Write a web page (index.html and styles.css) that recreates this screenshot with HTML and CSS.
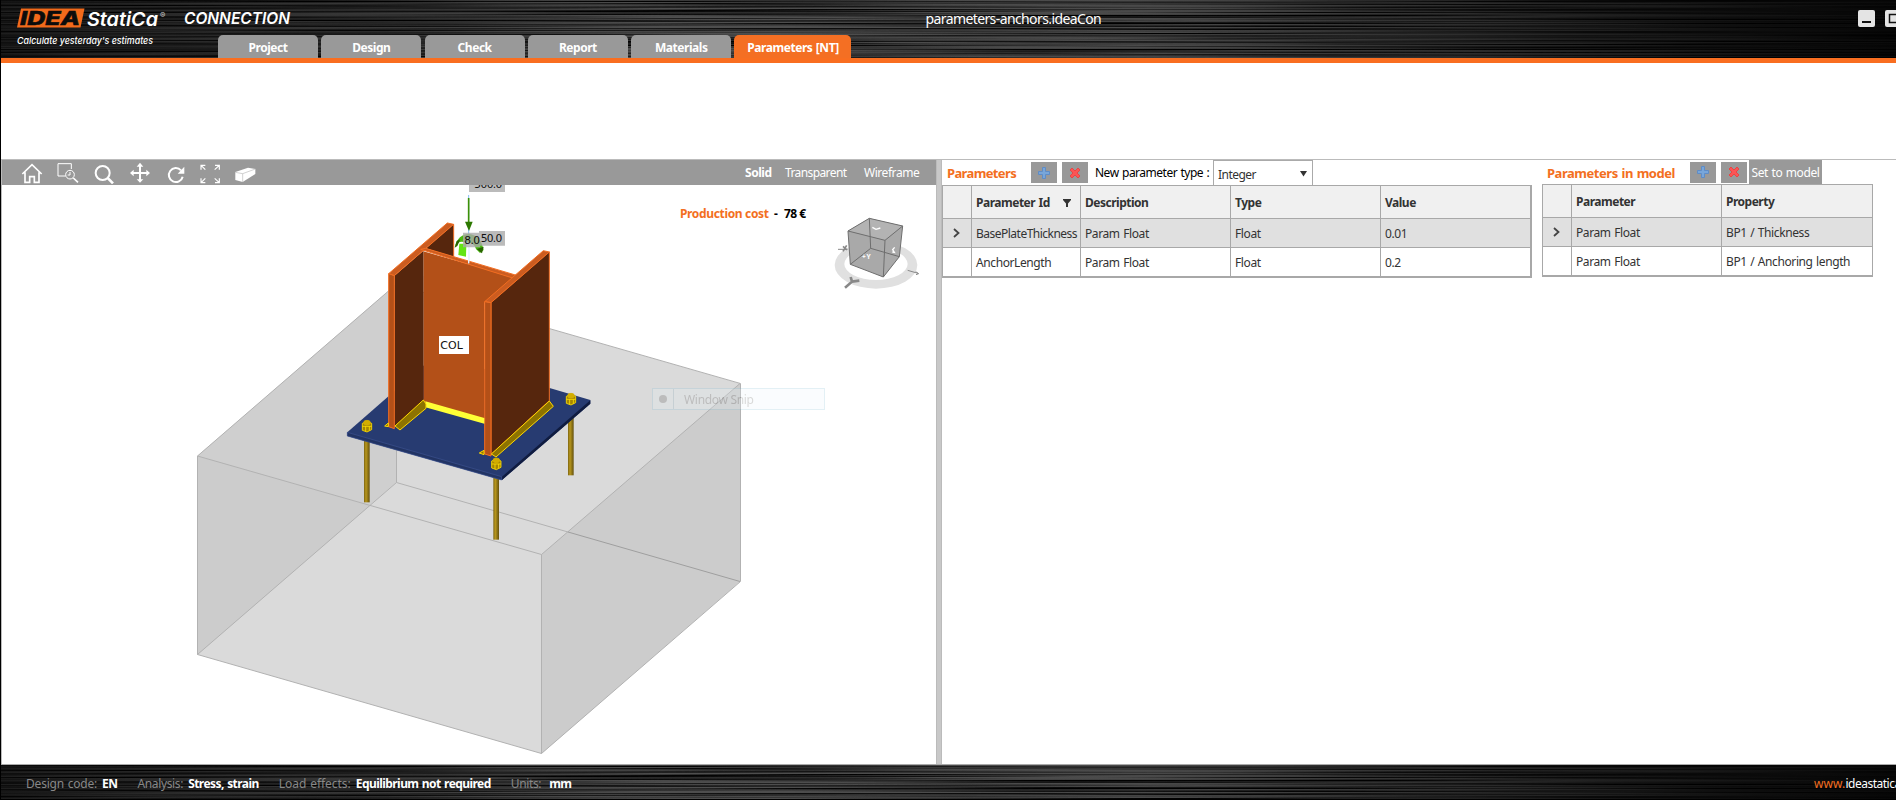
FILE: index.html
```
<!DOCTYPE html>
<html lang="en">
<head>
<meta charset="utf-8">
<title>parameters-anchors.ideaCon</title>
<link rel="stylesheet" href="styles.css">
</head>
<body>
<div class="app">
  <header class="header">
    <svg class="brushed" width="1896" height="58" aria-hidden="true">
      <defs>
        <filter id="brush" x="0" y="0" width="100%" height="100%">
          <feTurbulence type="fractalNoise" baseFrequency="0.0022 0.73" numOctaves="2" seed="11"/>
          <feColorMatrix type="matrix" values="0 0 0 0 0  0 0 0 0 0  0 0 0 0 0  2.4 0 0 0 -0.85"/>
        </filter>
        <linearGradient id="steel">
          <stop offset="0" stop-color="#1e1e1e"/><stop offset=".15" stop-color="#323232"/>
          <stop offset=".35" stop-color="#4e4e4e"/><stop offset=".6" stop-color="#4a4a4a"/>
          <stop offset=".85" stop-color="#1f1f1f"/><stop offset="1" stop-color="#0a0a0a"/>
        </linearGradient>
      </defs>
      <rect width="1896" height="58" fill="url(#steel)"/>
      <rect width="1896" height="58" filter="url(#brush)"/>
    </svg>
    <svg class="logo" width="183" height="58" viewBox="0 0 183 58">
      <path d="M21 8.500H84.500L80.500 27.500H17Z" fill="#f26a1b"/>
      <text x="20" y="25" class="logo-idea" textLength="60" lengthAdjust="spacingAndGlyphs">IDEA</text>
      <text x="87" y="26" class="logo-statica" textLength="71" lengthAdjust="spacingAndGlyphs">StatiCa</text>
      <text x="160" y="18" class="logo-reg">®</text>
      <text x="17" y="44" class="logo-tag" textLength="136" lengthAdjust="spacingAndGlyphs">Calculate yesterday's estimates</text>
    </svg>
    <svg class="product" width="125" height="30" viewBox="0 0 125 30">
      <text x="1" y="24" class="logo-conn" textLength="106" lengthAdjust="spacingAndGlyphs">CONNECTION</text>
    </svg>
    <nav class="tabs">
      <a class="tab">Project</a><a class="tab">Design</a><a class="tab">Check</a><a class="tab">Report</a><a class="tab">Materials</a><a class="tab tab-active">Parameters [NT]</a>
    </nav>
    <div class="doc-title">parameters-anchors.ideaCon</div>
    <div class="win-buttons">
      <svg width="17" height="17"><rect width="17" height="17" rx="2" fill="#e4e4e4"/><path d="M4 12H13" stroke="#111" stroke-width="2"/></svg>
      <svg width="17" height="17"><rect width="17" height="17" rx="2" fill="#e4e4e4"/><rect x="4.500" y="4.500" width="9" height="8" fill="none" stroke="#111" stroke-width="1.500"/></svg>
    </div>
  </header>
  <div class="ribbon"></div>
  <main class="main">
    <section class="viewer">
      <div class="toolbar">
        <svg width="22" height="22" viewBox="60 36 66 66" fill="none" stroke="#fff" stroke-width="5"><path d="M64 72L93 44L122 72M72 67V97H86V80H100V97H114V67"/></svg>
        <svg width="22" height="22" viewBox="171 36 66 66" fill="none" stroke="#fff" stroke-width="3"><path d="M197 78H174V41H214V57M210 66V75H203"/><circle cx="210" cy="74" r="13"/><path d="M220 84L234 97" stroke-width="5"/></svg>
        <svg width="22" height="22" viewBox="279 36 66 66" fill="none" stroke="#fff" stroke-width="6"><circle cx="308" cy="69" r="21"/><path d="M322 83L339 100" stroke-width="8"/></svg>
        <svg width="22" height="22" viewBox="387 36 66 66" fill="#fff"><path d="M420 38L430 50H423V66H439V59L450 69L439 79V72H423V88H430L420 98L410 88H417V72H401V79L390 69L401 59V66H417V50H410Z"/></svg>
        <svg width="22" height="22" viewBox="495 36 66 66" fill="none" stroke="#fff" stroke-width="6"><path d="M543 61A21 21 0 1 0 548 80"/><path d="M533 71H553V50Z" fill="#fff" stroke="none"/></svg>
        <svg class="icon-fit" width="22" height="22" viewBox="597 36 66 66" fill="none" stroke="#fff" stroke-width="3.500"><path d="M603 59V46H616M604 47L616 59M645 46H658V59M657 47L644 59M603 85V98H616M604 97L616 85M645 98H658V85M657 97L644 85"/></svg>
        <svg class="icon-box" width="24" height="22" viewBox="699 36 72 66"><path d="M706 66L744 53L766 57V72L728 96L706 90Z" fill="#fff"/><path d="M706 67L728 71L766 57M728 71V96" fill="none" stroke="#bbb" stroke-width="2"/></svg>
        <div class="modes"><b>Solid</b><span>Transparent</span><span>Wireframe</span></div>
      </div>
      <svg class="scene" width="934" height="579" viewBox="2 185 934 579">
        <!-- concrete block -->
        <path d="M197.500 456L396 284.500L740 383.500V581.500L541.500 753.500L197.500 654.500Z" fill="#dadada"/>
        <path d="M197.500 456L396 284.500V482.500L197.500 654.500Z" fill="#cfcfcf"/>
        <path d="M197.500 456L370 505.500L197.500 654.500Z" fill="#cccccc"/>
        <path d="M541.500 554.500L740 383.500V581.500L541.500 753.500Z" fill="#cccccc"/>
        <g fill="none" stroke="#b2b2b2">
          <path d="M197.500 456L396 284.500L740.500 383.500V581.500L541.500 753.500L197.500 654.500ZL541.500 554.500L740 383.500M541.500 554.500V753.500M396.500 284V482.500L197.500 654.500M396.500 482.500L568 532"/>
          <path d="M568 532L740 581.500" stroke="#9f9f9f"/>
        </g>
        <defs><linearGradient id="rod"><stop offset="0" stop-color="#7c6411"/><stop offset=".35" stop-color="#b8971d"/><stop offset="1" stop-color="#64510d"/></linearGradient></defs>
        <g transform="translate(330 180) scale(.33333)">
          <!-- anchors and base plate -->
          <g fill="url(#rod)"><path d="M102 770H119V967H102Z"/><path d="M490 880H507V1079H490Z"/><path d="M714 700H731V886H714Z"/></g>
          <path d="M52 757L318 524L781 660V671L516 900L52 768Z" fill="#273b71"/>
          <path d="M781 661V671L516 900V890Z" fill="#101c40"/>
          <path d="M52 757L515 890V900L52 768Z" fill="#223464" stroke="#3c5190" stroke-width="2"/>
          <!-- column -->
          <path d="M287 205L371 132V230L340 222Z" fill="#56260d"/>
          <path d="M280 214L555 292L463 368V722L280 668Z" fill="#b35018"/>
          <path d="M193 287L280 212V662L193 742Z" fill="#56260d"/>
          <g stroke="#f26d21" stroke-width="3" stroke-linejoin="round">
            <path d="M176 281L352 129L371 133L193 287Z" fill="#cb5c20"/>
            <path d="M272 208L287 205L563 287L548 294Z" fill="#cb5c20"/>
            <path d="M176 281L193 287V746L176 740Z" fill="#b35018"/>
            <path d="M464 365L640 212L658 216L483 368Z" fill="#cb5c20"/>
            <path d="M483 368L658 216V662L483 824Z" fill="#56260d"/>
            <path d="M464 365L483 368V828L464 822Z" fill="#b35018"/>
            <path d="M371 133V230" fill="none"/>
          </g>
          <!-- welds -->
          <path d="M286 664L463 714V731L286 682Z" fill="#ffff35"/>
          <g fill="#8d7300" stroke="#ffd900" stroke-width="3"><path d="M280 660L288 672V685L210 750L195 738Z"/><path d="M658 663L670 679L498 831L484 822Z"/><path d="M164 738L175 729V740Z"/><path d="M448 819L462 811V824Z"/></g>
          <!-- bolts -->
          <g stroke="#ffe000" stroke-width="2.500" fill="#a68700">
            <g id="bolt"><path d="M97 730L111 724L125 730V749L111 756L97 751Z"/><ellipse cx="111" cy="728" rx="10" ry="7" fill="#d2ad00" stroke="#d2ad00"/><path d="M97 739H125M107 739V754M118 739V752" fill="none"/></g>
            <use href="#bolt" x="388" y="113"/><use href="#bolt" x="612" y="-81"/>
          </g>
          <!-- loads -->
          <path d="M416 45V250" stroke="#86bdf5" stroke-width="3" stroke-dasharray="70 8"/>
          <path d="M416 54V127" stroke="#3c9108" stroke-width="5"/>
          <path d="M405 125H428L417 153Z" fill="#2c7800"/>
          <path d="M374 202Q384 162 417 162Q452 165 461 210L450 219L438 207Q432 185 405 187Q385 180 374 202Z" fill="#4cba12"/>
          <path d="M388 191H409L408 230L385 225Z" fill="#63e414"/><path d="M374 203L380 183L391 178L382 198ZM440 207L461 200L456 220Z" fill="#286400"/>
          <path d="M416 200V250" stroke="#e8f3ff" stroke-width="4"/>
          <g fill="#aaa" fill-opacity=".8"><path d="M417 0H525V36H417ZM447 153H525V197H447ZM399 158H450V202H399Z"/></g>
          <g class="load-label"><text x="433" y="24" textLength="84">500.0</text><text x="452" y="186" textLength="65">50.0</text><text x="403" y="192" textLength="47">8.0</text></g>
          <path d="M327 468H417V522H327Z" fill="#fff"/><text x="331" y="507" class="member-label" textLength="68">COL</text>
        </g>
        <!-- view cube -->
        <g transform="translate(640 150) scale(.33333)">
          <path fill-rule="evenodd" d="M584 345A124 71 0 0 1 832 345A124 71 0 0 1 584 345ZM613 342A95 48 0 0 0 803 342A95 48 0 0 0 613 342Z" fill="#e0e0e0"/>
          <path d="M624 243L688 205L788 228L778 320L730 381L631 343Z" fill="#a9a9a9"/>
          <path d="M624 243L735 271L788 228L688 205Z" fill="#b3b3b3"/>
          <path d="M624 243L688 205L788 228L735 271ZL631 343L730 381L778 320L788 228M735 271L730 381M688 205L692 295L631 343M692 295L778 320" fill="none" stroke="#6d6d6d" stroke-width="3"/>
          <path d="M803 361L834 370M827 365L836 371L828 374M594 298H622" fill="none" stroke="#888" stroke-width="3"/>
          <path d="M609 304L620 286M609 289L621 300" fill="none" stroke="#888" stroke-width="5"/>
          <path d="M615 413L636 395L632 381M636 395L658 392" fill="none" stroke="#888" stroke-width="8"/>
          <path d="M697 232L708 238L721 234M757 306L763 307L758 299L764 292" fill="none" stroke="#fff" stroke-width="4"/>
          <text x="666" y="326" class="cube-label" textLength="26">+Y</text>
        </g>
        <g class="cost"><text x="680" y="218" fill="#f36f21" textLength="89">Production cost</text><text x="774" y="218">-</text><text x="784" y="218" textLength="22">78 €</text></g>
        <!-- fading snip window -->
        <g opacity=".22"><rect x="652.500" y="388.500" width="172" height="21" fill="#e9f5fb" stroke="#83bfd6"/><path d="M673.500 389V409" stroke="#83a9bb"/><circle cx="663" cy="399" r="4" fill="#555"/><text x="684" y="404" class="snip" textLength="70">Window Snip</text></g>
      </svg>
    </section>
    <div class="splitter"></div>
    <section class="panel panel-params">
      <div class="panel-head">
        <h2 class="w-params">Parameters</h2>
        <button class="ib"><svg width="12" height="12"><path d="M4.500 .5H7.500V4.500H11.500V7.500H7.500V11.500H4.500V7.500H.5V4.500H4.500Z" fill="#78a6da" stroke="#5f8cc6"/></svg></button>
        <button class="ib"><svg width="12" height="12"><path d="M1 3L3 1L6 4L9 1L11 3L8 6L11 9L9 11L6 8L3 11L1 9L4 6Z" fill="#fb5555" stroke="#e94545"/></svg></button>
        <label class="new-type">New parameter type :</label>
        <div class="combo"><span>Integer</span><svg width="7" height="6"><path d="M0 0H7L3.500 5.500Z" fill="#333"/></svg></div>
      </div>
      <div class="grid grid-a">
        <div class="row head"><i></i><b class="filter-cell">Parameter Id<svg width="8" height="8"><path d="M0 0H8V1L5 4.500V8H3V4.500L0 1Z" fill="#333"/></svg></b><b>Description</b><b>Type</b><b>Value</b></div>
        <div class="row sel"><i><svg width="7" height="10"><path d="M1 1L5.500 5L1 9" fill="none" stroke="#444" stroke-width="1.800"/></svg></i><span class="tight">BasePlateThickness</span><span>Param Float</span><span>Float</span><span>0.01</span></div>
        <div class="row"><i></i><span>AnchorLength</span><span>Param Float</span><span>Float</span><span>0.2</span></div>
      </div>
    </section>
    <section class="panel panel-model">
      <div class="panel-head">
        <h2 class="w-model">Parameters in model</h2>
        <button class="ib"><svg width="12" height="12"><path d="M4.500 .5H7.500V4.500H11.500V7.500H7.500V11.500H4.500V7.500H.5V4.500H4.500Z" fill="#78a6da" stroke="#5f8cc6"/></svg></button>
        <button class="ib"><svg width="12" height="12"><path d="M1 3L3 1L6 4L9 1L11 3L8 6L11 9L9 11L6 8L3 11L1 9L4 6Z" fill="#fb5555" stroke="#e94545"/></svg></button>
        <button class="set">Set to model</button>
      </div>
      <div class="grid grid-b">
        <div class="row head"><i></i><b>Parameter</b><b>Property</b></div>
        <div class="row sel"><i><svg width="7" height="10"><path d="M1 1L5.500 5L1 9" fill="none" stroke="#444" stroke-width="1.800"/></svg></i><span>Param Float</span><span>BP1 / Thickness</span></div>
        <div class="row"><i></i><span>Param Float</span><span>BP1 / Anchoring length</span></div>
      </div>
    </section>
  </main>
  <footer class="footer">
    <svg class="brushed" width="1896" height="34" aria-hidden="true"><rect width="1896" height="34" fill="url(#steel)"/><rect width="1896" height="34" filter="url(#brush)"/></svg>
    <dl class="status">
      <dt class="dt-code">Design code:</dt><dd>EN</dd>
      <dt>Analysis:</dt><dd>Stress, strain</dd>
      <dt class="dt-load">Load effects:</dt><dd>Equilibrium not required</dd>
      <dt>Units:</dt><dd class="dd-unit">mm</dd>
    </dl>
    <div class="site"><span>www.</span>ideastatica.com</div>
  </footer>
</div>
</body>
</html>
```
FILE: styles.css
```
* { box-sizing: border-box; }
body { margin: 0; background: #fff; font: 12px/16px "Noto Sans", sans-serif; letter-spacing: -.45px; word-spacing: .8px; color: #333; overflow: hidden; }
.app { width: 1896px; height: 800px; display: flex; flex-direction: column; border-left: 1px solid #000; overflow: hidden; }
svg { display: block; flex: none; }
text { letter-spacing: 0; word-spacing: 0; }

.header { position: relative; height: 63px; flex: none; border-bottom: 5px solid #f96e20; background: #151515; display: flex; }
.header > * { position: relative; }
.header > .brushed, .footer > .brushed { position: absolute; left: 0; top: 0; }
.header > .logo { margin-left: -1px; flex: none; }
.logo-idea { font: italic 800 19px "Inter", "Open Sans", sans-serif; fill: #0c0c0c; stroke: #0c0c0c; stroke-width: .5px; }
.logo-statica { font: italic 600 19px "Inter", sans-serif; fill: #fff; }
.logo-reg { font: 8px "Inter", sans-serif; fill: #ccc; }
.logo-tag { font: italic 500 9.500px "Inter", sans-serif; fill: #fff; }
.logo-conn { font: italic 600 16px "Inter", sans-serif; fill: #fff; }
.tabs { display: flex; gap: 3.300px; margin: 35px 0 0 -90px; height: 23px; }
.tab { width: 100px; background: #999; border-radius: 5px 5px 0 0; color: #fff; font-weight: 700; text-align: center; line-height: 23px; padding-top: 1px; }
.tab-active { width: 117px; background: #f46f23; }
.header > .doc-title { margin: 9px 0 0 74px; width: 180px; color: #fff; font-size: 14px; line-height: 19px; letter-spacing: -.6px; white-space: nowrap; }
.win-buttons { display: flex; gap: 10px; margin: 10px 0 0 757px; }

.ribbon { height: 96px; flex: none; }
.main { height: 605px; flex: none; display: flex; border-top: 1px solid #bbb; }
.viewer { width: 935px; flex: none; border-left: 1px solid #bbb; }
.toolbar { height: 25px; padding: 1px 17px 0 19px; background: #999; display: flex; align-items: center; gap: 14px; }
.icon-fit { margin-left: -2px; }
.icon-box { margin-left: -2px; }
.modes { margin-left: auto; display: flex; color: #fff; align-items: center; }
.modes span { width: 79px; letter-spacing: -.6px; }
.modes b { width: 40px; }
.modes span:last-child { width: 55px; letter-spacing: -.45px; }
.splitter { width: 6px; flex: none; background: #c8c8c8; border-left: 1px solid #bbb; border-right: 1px solid #bbb; }

.load-label { font: 32px "DejaVu Sans", sans-serif; fill: #111; }
.member-label { font: 33px "DejaVu Sans", sans-serif; fill: #111; }
.cube-label { font: 700 20px "Noto Sans", sans-serif; fill: #fff; }
.cost { font: 700 12px "Noto Sans", sans-serif; fill: #000; }
.snip { font: 12px "Noto Sans", sans-serif; fill: #555; }

.panel { flex: none; }
.panel-params { width: 600px; }
.panel-model { width: 331px; }
.panel-head { height: 25px; display: flex; align-items: center; padding-left: 5px; white-space: nowrap; }
.panel-model .panel-head { height: 24px; }
h2 { margin: 0; color: #f36f21; font-size: 13px; letter-spacing: -.63px; line-height: 20px; padding-top: 1px; }
.w-params { width: 84px; }
.w-model { width: 143px; letter-spacing: -.46px; }
button { border: 0; padding: 0; background: #999; color: #fff; font: inherit; letter-spacing: -.4px; word-spacing: .8px; }
.ib { width: 26px; height: 21px; margin-right: 5px; display: flex; align-items: center; justify-content: center; }
.new-type { width: 120px; padding-left: 2px; color: #000; letter-spacing: -.5px; }
.combo { width: 100px; height: 25px; border: 1px solid #aaa; border-bottom: 0; padding: 2px 5px 0 4px; display: flex; align-items: center; justify-content: space-between; }
.combo span { padding-top: 1px; letter-spacing: -.55px; }
.set { width: 73px; height: 24px; margin-left: -3px; padding-top: 1px; }

.grid { border: 1px solid #a8a8a8; border-right-width: 2px; border-bottom-width: 2px; }
.grid-a { width: 590px; }
.grid-b { width: 331px; }
.panel-model .grid-b { border-right-width: 1px; }
.row { display: grid; height: 29px; border-top: 1px solid #a8a8a8; }
.grid-a .row { grid-template-columns: 29px 109px 150px 150px 1fr; }
.grid-b .row { grid-template-columns: 29px 150px 1fr; }
.row.head { height: 32px; border-top: 0; background: #f0f0f0; }
.row.sel { background: #e0e0e0; }
.row > * { border-right: 1px solid #a8a8a8; display: flex; align-items: center; padding: 2px 0 0 4px; white-space: nowrap; letter-spacing: -.4px; }
.row > i { padding: 0 2px 0 0; justify-content: center; width: 29px; }
.row > :last-child { border-right: 0; }
.row > b { letter-spacing: -.49px; }
.row > .tight { letter-spacing: -.51px; }
.filter-cell { gap: 13px; }

.footer { position: relative; height: 36px; flex: none; border-top: 1px solid #aaa; border-bottom: 1px solid #000; background: #111; display: flex; align-items: center; justify-content: space-between; }
.status { position: relative; margin: 3px 0 0 25px; display: flex; white-space: nowrap; }
.status dt { color: #888; margin-right: 5px; letter-spacing: -.35px; }
.status .dt-code { letter-spacing: -.2px; }
.status .dt-load { letter-spacing: -.03px; }
.status dd { margin: 0 20px 0 0; color: #fff; font-weight: 700; letter-spacing: -.56px; }
.status .dd-unit { margin-left: 3px; }
.site { position: relative; flex: none; width: 82px; margin-top: 3px; color: #fff; white-space: nowrap; letter-spacing: -.5px; }
.site span { color: #f36f21; letter-spacing: .1px; }
```
